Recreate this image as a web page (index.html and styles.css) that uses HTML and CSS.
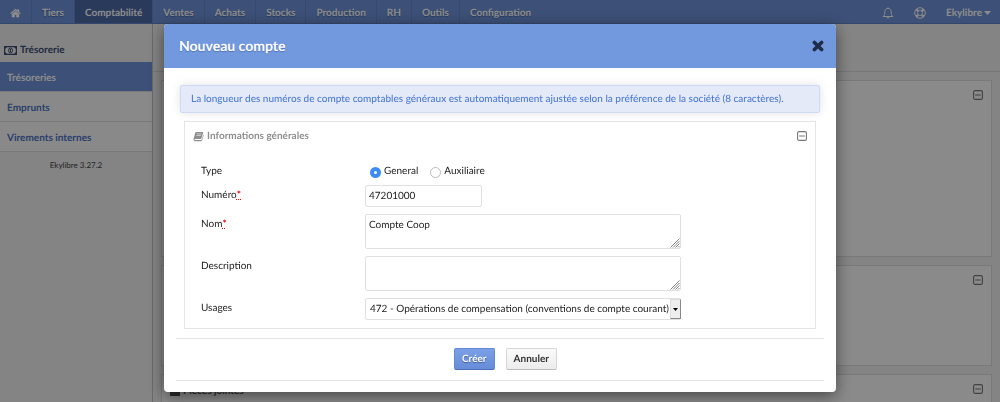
FILE: index.html
```html
<!DOCTYPE html>
<html lang="fr">
<head>
<meta charset="utf-8">
<meta name="viewport" content="width=device-width, initial-scale=1">
<title>Nouveau compte - Ekylibre</title>
<link rel="stylesheet" href="styles.css">
</head>
<body>
<svg class="defs" aria-hidden="true">
  <symbol id="collapse" viewBox="0 0 10 10"><rect x=".6" y=".6" width="8.8" height="8.8" rx="1.5" fill="none" stroke="currentColor" stroke-width="1.1"/><path d="M2.2 5h5.6" stroke="currentColor"/></symbol>
  <symbol id="grip" viewBox="0 0 10 10"><path d="M.5 9.500l9-9M3 9.500l6.500-6.500M5.500 9.500l4-4M8 9.500l1.500-1.500" stroke="currentColor" stroke-width=".9" fill="none"/></symbol>
</svg>
<div class="page">
  <header class="topbar">
    <nav class="menu">
      <a class="menu-item" href="#" aria-label="Accueil"><svg class="home" viewBox="0 0 12 10"><path d="M6 .6L.5 5.200l.7.8L6 2.100 10.800 6l.7-.8-1.700-1.400V1.200H8.200v1.200zM6 3L2.200 6.100V9.500H5V6.800h2v2.700h2.800V6.100z" fill="currentColor" stroke="currentColor" stroke-width=".4"/></svg></a>
      <a class="menu-item" href="#">Tiers</a>
      <a class="menu-item active" href="#">Comptabilité</a>
      <a class="menu-item" href="#">Ventes</a>
      <a class="menu-item" href="#">Achats</a>
      <a class="menu-item" href="#">Stocks</a>
      <a class="menu-item" href="#">Production</a>
      <a class="menu-item" href="#">RH</a>
      <a class="menu-item" href="#">Outils</a>
      <a class="menu-item" href="#">Configuration</a>
    </nav>
    <div class="tools">
      <a class="tool" href="#" aria-label="Notifications"><svg class="tool-icon" viewBox="0 0 12 12"><path d="M6 .4v1M1 9.500c1.500-1.200 1.800-2.500 1.900-4.700C3 2.700 4 1.400 6 1.400s3 1.300 3.100 3.400c.1 2.200.4 3.500 1.900 4.700zM4.800 9.700c.1 1.900 2.300 1.900 2.400 0" fill="none" stroke="currentColor"/></svg></a>
      <a class="tool" href="#" aria-label="Aide"><svg class="tool-icon" viewBox="0 0 12 12"><circle cx="6" cy="6" r="5.300" fill="none" stroke="currentColor"/><circle cx="6" cy="6" r="2.500" fill="none" stroke="currentColor" stroke-width=".8"/><path d="M2.300 2.300l2 2M9.700 2.300l-2 2M2.300 9.700l2-2M9.700 9.700l-2-2" stroke="currentColor" stroke-width="2.200"/></svg></a>
      <a class="tool" href="#">Ekylibre<svg class="caret" viewBox="0 0 7 4"><path d="M0 0h7L3.500 4z" fill="currentColor"/></svg></a>
    </div>
  </header>
  <div class="columns">
    <aside class="side">
      <h2 class="side-title"><svg class="money" viewBox="0 0 13 9"><path d="M.6.6h11.800v7.800H.6z" fill="none" stroke="currentColor" stroke-width="1.200"/><path d="M1 1h2L1 3zM12 1h-2l2 2zM1 8h2L1 6zM12 8h-2l2-2z" fill="currentColor"/><ellipse cx="6.500" cy="4.500" rx="2" ry="2.500" fill="none" stroke="currentColor"/><path d="M6.500 3v3" stroke="currentColor"/></svg>Trésorerie</h2>
      <a class="side-link current" href="#">Trésoreries</a>
      <a class="side-link" href="#">Emprunts</a>
      <a class="side-link" href="#">Virements internes</a>
      <p class="version">Ekylibre 3.27.2</p>
    </aside>
    <main class="main">
      <div class="toolbar"></div>
      <div class="panels">
        <section class="panel tall"><svg class="collapse"><use href="#collapse"/></svg></section>
        <section class="panel medium"><svg class="collapse"><use href="#collapse"/></svg></section>
        <section class="panel last"><h3 class="panel-title"><span class="panel-mark"></span>Pièces jointes</h3><svg class="collapse"><use href="#collapse"/></svg></section>
      </div>
    </main>
  </div>
</div>
<div class="overlay">
  <form class="modal" role="dialog" aria-labelledby="dialog-title">
    <header class="modal-head">
      <h1 class="modal-title" id="dialog-title">Nouveau compte</h1>
      <button class="close" type="button" aria-label="Fermer"><svg class="close-icon" viewBox="0 0 12 12"><path d="M2.400 2.400l7.200 7.200M9.600 2.400L2.400 9.600" stroke="currentColor" stroke-width="3.600" stroke-linecap="round"/></svg></button>
    </header>
    <div class="modal-body">
      <p class="notice">La longueur des numéros de compte comptables généraux est automatiquement ajustée selon la préférence de la société (8 caractères).</p>
      <section class="group">
        <h2 class="group-title"><svg class="book" viewBox="0 0 12 11"><path d="M3.600.5h6.800q.9.100.7 1L9.300 7.500q-.2.700-1 .7H2q-.6.100-.5.700.1.400.7.400h6.600q.7 0 .9-.7l1.600-5.200q.5.300.3.900L10 9.700q-.3.900-1.200.9H2Q.2 10.300.5 8.500L2.500 1.500Q2.800.5 3.600.5z" fill="currentColor"/><path d="M4.300 2.600h4.800M3.800 4.400h4.800" stroke="#fff" stroke-width=".6"/></svg>Informations générales<svg class="collapse"><use href="#collapse"/></svg></h2>
        <div class="fields">
          <div class="row radios" role="radiogroup" aria-labelledby="type-label">
            <span class="label" id="type-label">Type</span>
            <div class="choices">
              <label class="choice"><input class="radio" type="radio" name="type" checked>General</label>
              <label class="choice"><input class="radio" type="radio" name="type">Auxiliaire</label>
            </div>
          </div>
          <div class="row">
            <label class="label" for="number">Numéro<abbr class="required" title="Obligatoire">*</abbr></label>
            <input class="control short" id="number" type="text" value="47201000">
          </div>
          <div class="row">
            <label class="label" for="name">Nom<abbr class="required" title="Obligatoire">*</abbr></label>
            <div class="wide"><textarea class="control area" id="name">Compte Coop</textarea><svg class="grip"><use href="#grip"/></svg></div>
          </div>
          <div class="row">
            <label class="label" for="description">Description</label>
            <div class="wide"><textarea class="control area" id="description"></textarea><svg class="grip"><use href="#grip"/></svg></div>
          </div>
          <div class="row">
            <label class="label" for="usages">Usages</label>
            <div class="wide"><select class="control select" id="usages"><option>472 - Opérations de compensation (conventions de compte courant)</option></select><span class="drop"><svg class="drop-icon" viewBox="0 0 5 3"><path d="M0 0h5L2.500 3z"/></svg></span></div>
          </div>
        </div>
      </section>
      <div class="actions">
        <button class="button primary" type="submit">Créer</button>
        <button class="button" type="button">Annuler</button>
      </div>
    </div>
  </form>
</div>
</body>
</html>
```
FILE: styles.css
```css
* { box-sizing: border-box; }
html, body { height: 100%; }
body { margin: 0; overflow: hidden; font: 10px/14px Lato, "Open Sans", sans-serif; color: #222; text-rendering: geometricPrecision; }
h1, h2, h3, p { margin: 0; }
a { color: inherit; text-decoration: none; }
.defs { position: absolute; width: 0; height: 0; }

.page { display: flex; flex-direction: column; height: 100%; background: #f0f0f0; }
.topbar { display: flex; justify-content: space-between; height: 24px; background: #6e92da; border-bottom: 1px solid #5e80c4; color: #fff; font-weight: bold; }
.menu, .tools { display: flex; }
.menu-item { display: flex; align-items: center; padding: 2px 10px 0; border-right: 1px solid #6385cc; text-shadow: 0 1px 1px #4a69a8; }
.menu-item:last-child { border-right: 0; }
.menu-item.active { background: #4d6ba6; }
.home { width: 11px; height: 10px; }
.tools { align-items: center; gap: 20px; padding: 2px 9px 0 0; }
.tool { display: flex; align-items: center; gap: 2px; }
.tool-icon { width: 12px; height: 12px; }
.caret { width: 7px; height: 4px; }

.columns { display: flex; flex: 1; min-height: 0; }
.side { width: 153px; background: #f0f0f0; border-right: 1px solid #c0c0c0; }
.side-title { display: flex; align-items: center; gap: 3px; height: 38px; padding: 14px 4px 0; font-size: 10px; color: #3d4e72; }
.money { width: 13px; height: 9px; }
.side-link { display: flex; align-items: center; height: 30px; padding: 2px 7px 0; border-bottom: 1px solid #dcdcdc; background: #fafafa; color: #4c73c4; font-weight: bold; }
.side-link.current { background: #6e92da; color: #fff; }
.version { padding: 6px 0; text-align: center; font-size: 8px; color: #444; }
.main { display: flex; flex: 1; flex-direction: column; min-height: 0; }
.toolbar { height: 48px; border-bottom: 1px solid #d8d8d8; }
.panels { display: flex; flex: 1; flex-direction: column; gap: 8px; min-height: 0; padding: 8px 8px 0; }
.panel { display: flex; align-items: flex-start; padding: 9px 8px; border: 1px solid #dcdcdc; background: #fcfcfc; }
.tall { height: 177px; }
.medium { height: 101px; }
.last { flex: 1; padding-bottom: 0; border-bottom: 0; }
.panel-title { display: flex; align-items: center; gap: 3px; font-size: 10px; color: #555; }
.panel-mark { width: 10px; height: 10px; background: #555; }
.collapse { width: 10px; height: 10px; margin-left: auto; color: #777; }

.overlay { position: fixed; inset: 0; display: flex; justify-content: center; align-items: flex-start; padding: 24px 16px 0; background: rgba(0, 0, 0, .45); }
.modal { width: 100%; max-width: 672px; overflow: hidden; border-radius: 4px; background: #fff; box-shadow: 0 4px 16px rgba(0, 0, 0, .5); }
.modal-head { display: flex; align-items: center; justify-content: space-between; height: 44px; padding: 0 12px 0 15px; background: #7298de; }
.modal-title { font-size: 14px; line-height: 18px; color: #fff; text-shadow: 0 1px 1px #5575b5; }
.close { display: flex; padding: 0; border: 0; background: none; color: #1e2c48; }
.close-icon { width: 12px; height: 12px; }
.modal-body { padding: 17px 12px 11px; }
.notice { margin: 0 4px; padding: 6px 10px; border: 1px solid #d0dbf3; border-radius: 2px; background: #e4eaf8; box-shadow: 0 0 8px rgba(0, 0, 0, .12); color: #4d7bd6; font-weight: 500; }
.group { margin: 8px 8px 9px; border: 1px solid #e4e4e4; }
.group-title { display: flex; align-items: center; gap: 3px; height: 28px; padding: 0 8px; font-size: 10px; color: #8e8e8e; }
.book { width: 11px; height: 11px; }
.fields { display: flex; flex-direction: column; gap: 7px; padding: 14px 16px 8px; }
.row { display: flex; align-items: flex-start; }
.label { flex: 0 0 164px; padding-top: 3px; }
.radios .label { padding-top: 0; }
.choices { display: flex; gap: 12px; padding-left: 5px; }
.choice { display: flex; align-items: center; gap: 3px; }
.radio { appearance: none; width: 11px; height: 11px; margin: 2px 0 0; border: 1px solid #bbb; border-radius: 50%; background: #fff; }
.radio:checked { border: 4px solid #3b8cf8; }
.required { color: #e00; font-weight: bold; text-decoration: underline dotted; }
.control { display: block; width: 100%; margin: 0; border: 1px solid #e0e0e0; border-radius: 2px; background: #fff; color: #222; font: inherit; text-rendering: inherit; }
.short { width: 117px; height: 22px; padding: 0 3px; }
.wide { position: relative; flex: 0 1 316px; }
.area { height: 35px; padding: 3px; resize: none; }
.grip { position: absolute; right: 1px; bottom: 1px; width: 10px; height: 10px; color: #777; }
.select { height: 22px; padding: 0 10px 0 4px; appearance: none; }
.drop { position: absolute; top: 1px; right: 0; bottom: 1px; display: flex; align-items: center; justify-content: center; width: 11px; border: 1px solid #ddd; border-right-color: #888; border-bottom-color: #888; background: #eee; pointer-events: none; }
.drop-icon { width: 5px; height: 3px; }
.actions { display: flex; justify-content: center; gap: 11px; padding: 9px 0 10px 11px; border: solid #e4e4e4; border-width: 1px 0; }
.button { height: 22px; padding: 0 7px; border: 1px solid #d6d6d6; border-bottom-color: #bbb; border-radius: 2px; background: linear-gradient(#fafafa, #ececec); color: #333; font: bold 10px/14px Lato, "Open Sans", sans-serif; text-rendering: inherit; }
.primary { border-color: #6389d4; border-bottom-color: #4d70b8; background: linear-gradient(#7ba0e6, #668cd8); color: #fff; text-shadow: 0 1px 1px #3d5a94; }
```
